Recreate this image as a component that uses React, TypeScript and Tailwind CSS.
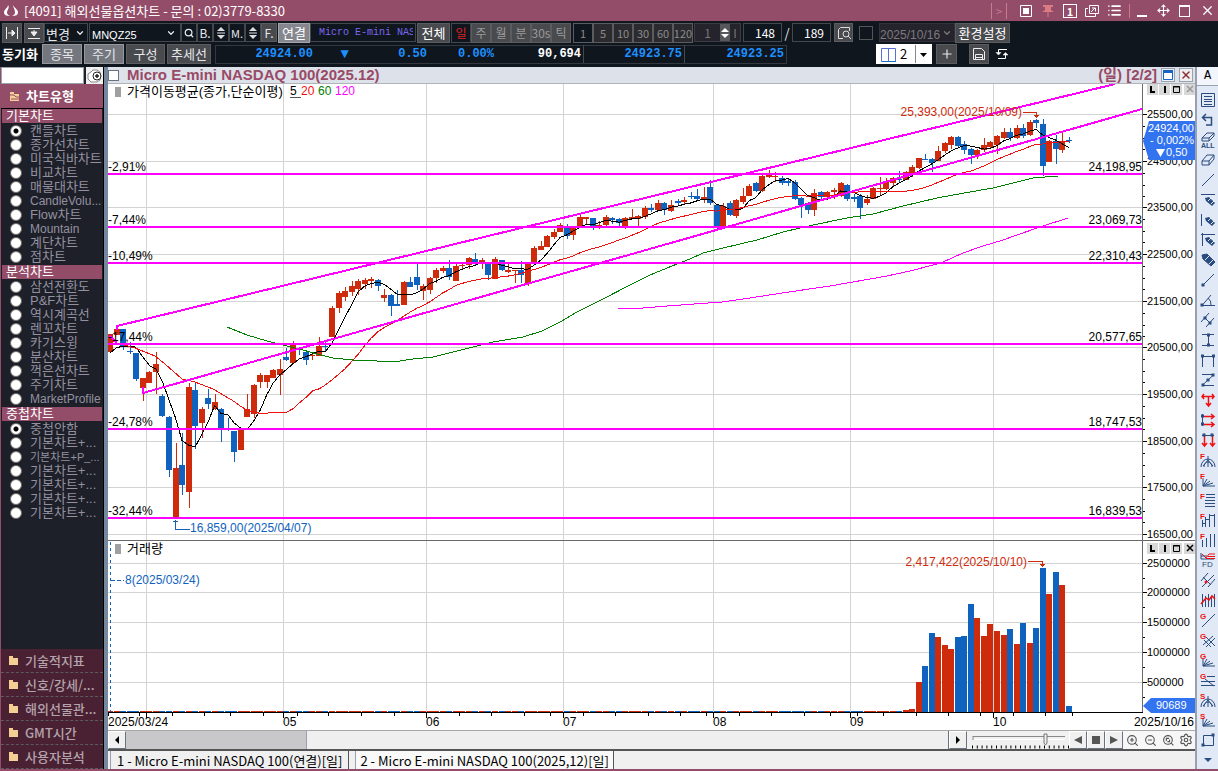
import type { ReactNode } from 'react'
import { ChevronDown, List, Move, Plus, Search, Settings, X, ZoomIn, ZoomOut } from 'lucide-react'

type Candle = [color: 'R' | 'B', high: number, top: number, bottom: number, low: number]

// Values are thirds of a pixel below the top of the price panel
const CANDLES: Candle[] = [
  ['R', 762, 762, 815, 820], ['R', 738, 747, 764, 764], ['B', 747, 747, 800, 810], ['B', 785, 813, 817, 822],
  ['B', 818, 818, 896, 902], ['R', 894, 894, 923, 962], ['R', 874, 876, 910, 910], ['R', 816, 852, 875, 942],
  ['B', 942, 948, 1007, 1010], ['B', 1009, 1012, 1169, 1190], ['R', 1089, 1164, 1315, 1315], ['B', 1060, 1155, 1214, 1245],
  ['R', 910, 921, 1237, 1284], ['B', 908, 930, 1037, 1106], ['R', 980, 987, 1028, 1074], ['B', 927, 954, 971, 988],
  ['R', 942, 966, 986, 990], ['B', 983, 987, 1045, 1086], ['B', 1015, 1045, 1048, 1052], ['B', 1053, 1053, 1115, 1146],
  ['R', 1047, 1049, 1109, 1109], ['R', 942, 987, 1012, 1012], ['R', 912, 915, 1001, 1014], ['R', 879, 885, 905, 924],
  ['R', 885, 885, 905, 924], ['R', 867, 870, 893, 893], ['R', 837, 867, 884, 945], ['B', 804, 831, 839, 842],
  ['R', 784, 795, 848, 850], ['B', 800, 808, 811, 824], ['B', 816, 816, 839, 854], ['R', 818, 825, 828, 840],
  ['R', 771, 797, 827, 827], ['B', 785, 798, 801, 814], ['R', 678, 684, 770, 770], ['R', 633, 639, 685, 698],
  ['R', 621, 633, 650, 662], ['R', 603, 618, 636, 648], ['R', 597, 603, 627, 645], ['R', 594, 600, 612, 627],
  ['R', 591, 597, 603, 624], ['B', 597, 600, 618, 633], ['R', 626, 645, 653, 666], ['B', 642, 645, 677, 707],
  ['B', 630, 673, 677, 677], ['R', 602, 606, 674, 674], ['B', 590, 606, 620, 620], ['B', 550, 591, 614, 630],
  ['R', 613, 618, 632, 660], ['R', 591, 594, 629, 642], ['R', 564, 570, 593, 608], ['R', 558, 564, 572, 578],
  ['B', 540, 564, 590, 600], ['R', 552, 558, 602, 602], ['R', 549, 555, 558, 566], ['R', 531, 534, 554, 566],
  ['B', 519, 537, 546, 558], ['R', 534, 540, 548, 567], ['B', 548, 552, 584, 600], ['R', 531, 537, 596, 596],
  ['B', 540, 540, 569, 572], ['R', 548, 570, 575, 580], ['R', 570, 570, 573, 609], ['B', 543, 570, 584, 609],
  ['R', 548, 548, 608, 618], ['R', 498, 504, 546, 546], ['R', 483, 498, 509, 509], ['R', 465, 468, 500, 500],
  ['R', 447, 456, 470, 477], ['R', 429, 435, 455, 455], ['B', 432, 440, 467, 478], ['R', 440, 440, 464, 480],
  ['R', 405, 411, 440, 440], ['R', 411, 411, 416, 436], ['B', 414, 414, 440, 450], ['R', 423, 435, 438, 446],
  ['R', 405, 411, 435, 440], ['B', 410, 414, 419, 431], ['B', 414, 418, 428, 437], ['R', 411, 414, 440, 446],
  ['R', 387, 411, 418, 418], ['R', 405, 408, 416, 438], ['R', 378, 384, 410, 417], ['B', 372, 384, 390, 396],
  ['R', 360, 369, 390, 390], ['B', 366, 369, 390, 405], ['R', 360, 375, 392, 396], ['B', 357, 363, 369, 375],
  ['R', 351, 360, 366, 374], ['B', 336, 348, 351, 356], ['B', 327, 348, 357, 362], ['R', 321, 351, 358, 369],
  ['B', 300, 321, 368, 374], ['B', 372, 375, 438, 446], ['R', 369, 378, 440, 440], ['B', 363, 369, 405, 408],
  ['R', 357, 360, 408, 414], ['R', 324, 348, 366, 372], ['R', 312, 318, 347, 347], ['B', 306, 309, 332, 335],
  ['R', 282, 288, 332, 335], ['R', 270, 284, 291, 294], ['R', 276, 288, 291, 306], ['B', 287, 294, 308, 315],
  ['B', 294, 303, 309, 318], ['B', 300, 306, 356, 360], ['B', 351, 354, 375, 414], ['B', 366, 369, 389, 402],
  ['R', 327, 339, 389, 408], ['B', 333, 336, 350, 362], ['R', 333, 336, 350, 360], ['R', 324, 330, 336, 357],
  ['R', 306, 309, 348, 350], ['B', 312, 315, 356, 363], ['B', 342, 351, 356, 366], ['B', 342, 348, 383, 416],
  ['R', 345, 357, 368, 375], ['R', 321, 324, 358, 358], ['R', 291, 324, 327, 348], ['R', 294, 303, 327, 330],
  ['R', 291, 294, 309, 318], ['B', 273, 297, 300, 309], ['R', 273, 276, 300, 300], ['R', 255, 261, 284, 290],
  ['R', 234, 234, 264, 267], ['B', 222, 237, 240, 240], ['B', 234, 237, 248, 276], ['R', 198, 213, 242, 242],
  ['R', 186, 189, 213, 219], ['R', 168, 171, 195, 207], ['B', 168, 171, 198, 200], ['B', 183, 192, 209, 222],
  ['B', 204, 207, 225, 252], ['R', 207, 210, 225, 237], ['R', 174, 195, 210, 216], ['R', 183, 186, 201, 207],
  ['R', 165, 168, 195, 222], ['R', 144, 156, 173, 177], ['B', 144, 156, 174, 183], ['R', 135, 144, 173, 176],
  ['B', 132, 144, 168, 174], ['R', 120, 126, 164, 168], ['B', 117, 120, 130, 144], ['B', 117, 132, 257, 287],
  ['R', 180, 183, 245, 245], ['B', 165, 183, 206, 252], ['R', 156, 183, 209, 219], ['B', 171, 180, 183, 189],
]

// Bar heights of the last sessions, oldest first
const VOLUMES = [
  1, 1, 1, 2, 3, 30, 46, 79, 75, 67, 63, 75, 76, 108, 94, 76, 88, 81, 77, 83, 68, 89, 69, 84, 144, 118, 140, 127, 6,
]

const RED = '#ce2b0c'
const BLUE = '#0f63be'
const MAGENTA = '#ff00ff'

const xAt = (i: number) => 110.3 + i * 6.52
const yAt = (v: number) => Math.round(80 + v / 3)

const closes = CANDLES.map(([c, , top, bottom]) => (c === 'R' ? top : bottom))

function average(period: number) {
  const pts: string[] = []
  for (let i = period - 1; i < closes.length; i++) {
    const sum = closes.slice(i - period + 1, i + 1).reduce((a, b) => a + b, 0)
    pts.push(`${xAt(i).toFixed(1)},${(80 + sum / period / 3).toFixed(1)}`)
  }
  return pts.join(' ')
}

const MA5 = `110,353 116,348 123,346 133,346 ${average(5)}`
const MA20 = `110,340 117,343 135,348 155,356 165,364 182,379 195,382 213,389 ${average(20)}`
const MA60 =
  '227,327 247,335 267,341 283,345 303,350 317,354 333,358 353,360 377,361 400,361 413,359 433,357 453,352 477,346 493,342 523,337 542,331 560,322 577,312 603,299 630,285 650,275 677,264 690,259 703,253 723,248 757,240 783,232 813,225 847,218 873,214 903,206 937,198 970,192 993,188 1033,178 1058,176'
const MA120 =
  '618,309 643,308 667,306 722,302 750,298 782,293 830,286 870,279 887,276 910,271 937,264 943,262 963,253 983,246 1003,240 1017,235 1040,227 1068,218'

const PRICE_GRID = [
  { y: 114, label: '25500,00' }, { y: 161, label: '24500,00' }, { y: 207, label: '23500,00' },
  { y: 254, label: '22500,00' }, { y: 301, label: '21500,00' }, { y: 347, label: '20500,00' },
  { y: 394, label: '19500,00' }, { y: 441, label: '18500,00' }, { y: 487, label: '17500,00' },
  { y: 534, label: '16500,00' },
]
const VOLUME_GRID = [
  { y: 563, label: '2500000' }, { y: 592, label: '2000000' }, { y: 622, label: '1500000' },
  { y: 652, label: '1000000' }, { y: 682, label: '500000' },
]
const LEVELS = [
  { y: 174, pct: '-2,91%', price: '24,198,95' },
  { y: 227, pct: '-7,44%', price: '23,069,73' },
  { y: 263, pct: '-10,49%', price: '22,310,43' },
  { y: 344, pct: '-17,44%', price: '20,577,65' },
  { y: 429, pct: '-24,78%', price: '18,747,53' },
  { y: 518, pct: '-32,44%', price: '16,839,53' },
]
const MONTHS = [
  { x: 146 }, { x: 283, label: '05' }, { x: 426, label: '06' }, { x: 563, label: '07' },
  { x: 713, label: '08' }, { x: 850, label: '09' }, { x: 993, label: '10' },
]
const WEEKS = [
  108, 139, 172, 204, 230, 263, 297, 328, 361, 394, 426, 459, 491, 524, 550, 583, 615, 648, 680, 706, 739, 771, 804,
  830, 857, 883, 916, 948, 980, 1013, 1045, 1072,
]

function PanelButtons({ y }: { y: number }) {
  return (
    <g>
      {[1147, 1159, 1171, 1184].map(x => (
        <rect key={x} x={x} y={y - 5} width="11" height="11" fill="#d8d8d8" />
      ))}
      <path d={`M1151 ${y - 3}v6h4`} stroke="#000" strokeWidth="2" fill="none" />
      <path d={`M1165 ${y - 3}v7`} stroke="#000" strokeWidth="2" />
      <path d={`M1173.5 ${y - 2.5}h6v6h-6zM1173 ${y - 2}h7`} stroke="#000" fill="none" />
      <path d={`M1187 ${y - 3}l6 6m0 -6l-6 6`} stroke={y < 100 ? '#999' : '#000'} strokeWidth="1.5" />
    </g>
  )
}

function Chart() {
  return (
    <svg
      viewBox="108 84 1087 646"
      preserveAspectRatio="xMinYMin meet"
      className="block min-h-0 w-full flex-1 bg-white text-[12px] font-['Liberation_Sans','Noto_Sans_CJK_KR',sans-serif]"
      role="img"
      aria-label="Micro E-mini NASDAQ 100"
    >
      <g shapeRendering="crispEdges" fill="none">
        {/* Grid */}
        <g stroke="#d3d3d3">
          {[...PRICE_GRID, ...VOLUME_GRID].map(g => (
            <path key={g.y} d={`M108 ${g.y + 0.5}H1142`} />
          ))}
          {MONTHS.map(m => (
            <path key={m.x} d={`M${m.x + 0.5} 84V712`} />
          ))}
        </g>

        {/* Candles */}
        {CANDLES.map(([c, high, top, bottom, low], i) => {
          const x = Math.round(xAt(i))
          const color = c === 'R' ? RED : BLUE
          return (
            <g key={i} fill={color}>
              <rect x={x} y={yAt(high)} width="1" height={Math.max(1, yAt(low) - yAt(high))} />
              <rect x={x - 3} y={yAt(top)} width="6" height={Math.max(1, yAt(bottom) - yAt(top))} />
            </g>
          )
        })}

        {/* Volume */}
        {CANDLES.map(([c], i) => {
          const h = VOLUMES[i - (CANDLES.length - VOLUMES.length)] ?? 1
          return <rect key={i} x={Math.round(xAt(i)) - 3} y={712 - h} width="6" height={h} fill={c === 'R' ? RED : BLUE} />
        })}

        {/* Moving averages */}
        <polyline points={MA5} stroke="#000" />
        <polyline points={MA20} stroke="#f01010" />
        <polyline points={MA60} stroke="#008000" />
        <polyline points={MA120} stroke={MAGENTA} />

        {/* Trend lines and levels */}
        <g stroke={MAGENTA} strokeWidth="2">
          <path d="M110 336L117 343M117 330V326L1115 84M143 387V393L1142 109" />
          {LEVELS.map(l => (
            <path key={l.y} d={`M108 ${l.y}H1142`} />
          ))}
        </g>

        {/* Axes */}
        <path d="M1142.5 84V713M108 540.5H1195" stroke="#696969" />
        <path d="M108 712.5H1143" stroke="#000" />
        <path d={PRICE_GRID.map(g => `M1143 ${g.y + 0.5}h4`).join('')} stroke="#000" />
        <path d={VOLUME_GRID.map(g => `M1143 ${g.y + 0.5}h4M1143 ${g.y + 15.5}h2`).join('')} stroke="#000" />
        <path d={PRICE_GRID.slice(0, 9).map(g => `M1143 ${g.y + 12.5}h2m-2 12h2m-2 11h2`).join('')} stroke="#000" />
        <path d={WEEKS.map(x => `M${x + 0.5} 713v3`).join('')} stroke="#000" />
        <path d={MONTHS.map(m => `M${m.x + 0.5} 713v5`).join('')} stroke="#000" />
        <path d="M110.5 542V712" stroke={BLUE} strokeDasharray="3 3" />
        <path d="M111 580.5H124" stroke={BLUE} strokeDasharray="4 2" />

        {/* High and low callouts */}
        <path d="M175.5 520V529.5H190M173 521.5h5" stroke={BLUE} />
        <path d="M1023 112.5H1036.5V118M1034 115.5h5M1035 116.5h3M1028 561.5H1042.5V567M1040 564.5h5M1041 565.5h3" stroke={RED} />
      </g>

      {/* Labels */}
      {LEVELS.map(l => (
        <g key={l.y}>
          <text x="108" y={l.y - 3}>{l.pct}</text>
          <text x="1142" y={l.y - 3} textAnchor="end">{l.price}</text>
        </g>
      ))}
      <g className="text-[11px]">
        {[...PRICE_GRID, ...VOLUME_GRID].map(g => (
          <text key={g.y} x="1147" y={g.y + 4}>{g.label}</text>
        ))}
      </g>
      {MONTHS.filter(m => m.label).map(m => (
        <text key={m.x} x={m.x} y="726">{m.label}</text>
      ))}
      <text x="108" y="726">2025/03/24</text>
      <text x="1194" y="726" textAnchor="end">2025/10/16</text>
      <text x="1022" y="116" textAnchor="end" fill={RED}>25,393,00(2025/10/09)</text>
      <text x="1027" y="566" textAnchor="end" fill={RED}>2,417,422(2025/10/10)</text>
      <text x="190" y="532" fill={BLUE}>16,859,00(2025/04/07)</text>
      <text x="125" y="584" fill={BLUE}>8(2025/03/24)</text>

      <rect x="115" y="87" width="6" height="10" fill="#a0a0a0" />
      <rect x="115" y="544" width="6" height="10" fill="#a0a0a0" />
      <g className="text-[13px]">
        <text x="127" y="96">가격이동평균(종가,단순이평)</text>
        <text x="127" y="553">거래량</text>
      </g>
      <text x="290" y="95">5</text>
      <path d="M290 97.5h11" stroke="#555" />
      <text x="301" y="95" fill="#f01010">20</text>
      <text x="318" y="95" fill="#008000">60</text>
      <text x="335" y="95" fill={MAGENTA}>120</text>

      <PanelButtons y={89} />
      <PanelButtons y={548} />

      {/* Current value tags */}
      <path d="M1143 141L1149 121H1195V160H1149Z" fill="#3273f0" />
      <path d="M1143 706L1151 698H1195V713H1151Z" fill="#3273f0" />
      <g fill="#fff" className="text-[11px]">
        <text x="1148" y="132">24924,00</text>
        <text x="1150" y="144">- 0,002%</text>
        <path d="M1156 149h9l-4.500 8z" />
        <text x="1166" y="156">0,50</text>
        <text x="1156" y="709">90689</text>
      </g>
    </svg>
  )
}

/* ---------- drawing tools ---------- */

const pen = (
  <>
    <path d="M5 6l4-1 6 6-3 3-6-5z" fill="#2b4c7e" stroke="none" />
    <path d="M8 9l3-3M11 12l3-3" stroke="#e1e8f6" />
  </>
)
const dot = (x: number, y: number) => <rect x={x - 1.5} y={y - 1.5} width="3" height="3" fill="#2b4c7e" stroke="none" />
const mark = (letter: string) => (
  <text x="0" y="7" stroke="none" fill="#f01010" className="text-[8px] font-bold font-['Liberation_Sans',sans-serif]">
    {letter}
  </text>
)
const fan = <path d="M3 6v8h12M3 14l4-7M3 14l7-5M3 14l10-3" />
const arcs = <path d="M8 4v11M1 15a7 8 0 0 1 14 0M4 15a4 5 0 0 1 8 0M8 8l-5 6M8 8l5 6" />

const TOOLS: { name: string; icon: ReactNode }[] = [
  { name: 'List', icon: <path d="M1.500 1.500h13v13h-13zM4 4.500h8M4 7.500h8M4 9.500h8M4 12.500h8" /> },
  { name: 'Undo', icon: <path d="M6 2L2.500 5.500L6 9M2.500 5.500H11.500V13H6" strokeWidth="1.500" /> },
  {
    name: 'Erase all',
    icon: (
      <>
        <path d="M2 6l5-5h7l-5 5zM2 6v3h7l5-5V1M9 6v3" />
        <text x="1" y="16" stroke="none" fill="#2b4c7e" className="text-[7px] font-bold font-['Liberation_Sans',sans-serif]">ALL</text>
      </>
    ),
  },
  { name: 'Erase', icon: <path d="M2 9l5-6h7l-5 6zM2 9v4h7l5-6V3M9 9v4" /> },
  { name: 'Line', icon: <path d="M2 14L14 2" /> },
  { name: 'Horizontal line', icon: <><path d="M1 2.500h14" />{pen}</> },
  { name: 'Vertical line', icon: <><path d="M1.500 2v12" />{pen}</> },
  { name: 'Cross line', icon: <><path d="M1 2.500h14M2.500 1v13" />{pen}</> },
  { name: 'Pen', icon: <><path d="M2 3l5-1 8 8-4 4-8-7z" fill="#2b4c7e" /><path d="M5 8l4-4M9 12l4-4" stroke="#e1e8f6" /></> },
  { name: 'Segment', icon: <><path d="M3 13L14 2" />{dot(3, 13)}</> },
  { name: 'Angle', icon: <><path d="M15 13.500H2L11 3M8 6a8 8 0 0 1 3 7" />{dot(2, 13)}</> },
  { name: 'Channel', icon: <><path d="M1 10L9 1M6 15L14 6M5 6l5 5" />{dot(5, 6)}{dot(10, 11)}</> },
  { name: 'Height', icon: <><path d="M2 2.500h12M2 13.500h12M8.500 2v12" />{dot(8.5, 3)}{dot(8.5, 13)}</> },
  { name: 'Period', icon: <><path d="M2.500 3v12M13.500 3v12M2 4.500h12" />{dot(2.5, 4)}{dot(13.5, 4)}</> },
  { name: 'Zigzag', icon: <><path d="M2 2.500h12L2 13.500h12" />{dot(13, 3)}{dot(8, 8)}{dot(3, 13)}</> },
  { name: 'Move', icon: <path d="M2 4.500h12M8.500 4v9M4 2L2 4.500L4 7M12 2l2 2.500L12 7M6 11l2.500 3L11 11" stroke="#f01010" strokeWidth="1.500" /> },
  { name: 'Extend right', icon: <><path d="M2.500 2v12" /><path d="M3 4.500h11M3 12.500h11M11 2l3 2.500L11 7M11 10l3 2.500L11 15" stroke="#f01010" strokeWidth="1.500" />{dot(2.5, 4)}{dot(2.5, 12)}</> },
  { name: 'Extend down', icon: <><path d="M2 3.500h12" /><path d="M4.500 4v9M12.500 4v9M2 11l2.500 3L7 11M10 11l2.500 3L15 11" stroke="#f01010" strokeWidth="1.500" />{dot(4, 3)}{dot(12, 3)}</> },
  { name: 'Fibonacci arc', icon: <>{arcs}{mark('F')}</> },
  { name: 'Fibonacci fan', icon: <>{fan}{mark('F')}</> },
  { name: 'Fibonacci levels', icon: <><path d="M6 2.500h9M6 5.500h9M5 8.500h10M5 11.500h10M5 14.500h10" />{mark('F')}</> },
  { name: 'Fibonacci zones', icon: <><path d="M2.500 8v7M5.500 5v10M9.500 2v13M14.500 2v13M5 7.500h4M9 3.500h5M2 11.500h4" />{mark('F')}</> },
  { name: 'Fibonacci time', icon: <><path d="M2.500 8v7M6.500 6v9M10.500 2v13M14.500 2v13" />{mark('F')}</> },
  {
    name: 'FD',
    icon: (
      <>
        <path d="M1 1v6h13M1 4h6" /><path d="M2 2l4 4 3-4 6 0M8 4.500h7M6 6.500h9" stroke="#f01010" />
        <text x="2" y="15" stroke="none" fill="#2b4c7e" className="text-[8px] font-['Liberation_Sans',sans-serif]">FD</text>
      </>
    ),
  },
  { name: 'Pitchfork', icon: <><path d="M1 9L8 1M2 15L14 3M8 15l7-8M3 5l8 8" /><circle cx="6" cy="10" r="1.500" fill="#f01010" stroke="none" /></> },
  { name: 'Regression', icon: <><path d="M2.500 2v13M5.500 4v11M8.500 2v13M11.500 4v11M14.500 2v13" /><path d="M1 12l5-6 3 2 3-4 3 3" stroke="#f01010" strokeWidth="1.500" /></> },
  { name: 'Gann line', icon: <><path d="M2 15L15 2" />{mark('G')}</> },
  { name: 'Gann grid', icon: <><path d="M3 13L13 4M6 15l9-9M6 5l9 9M4 8l7 7" />{mark('G')}</> },
  { name: 'Gann fan', icon: <>{fan}{mark('G')}</> },
  { name: 'Gann levels', icon: <><path d="M7 4.500h8M1 9.500h14M1 13.500h14M5 7l9 7" />{mark('G')}</> },
  { name: 'Speed arc', icon: <>{arcs}{mark('S')}</> },
  { name: 'Speed fan', icon: <>{fan}{mark('S')}</> },
  { name: 'Rectangle', icon: <><path d="M3.500 3.500h10v10h-10z" />{dot(13, 3)}{dot(3, 13)}</> },
  { name: 'More', icon: <path d="M4 6h8l-4 4z" fill="#2b4c7e" stroke="none" /> },
]

function ToolStrip() {
  return (
    <aside className="flex w-[21px] shrink-0 flex-col bg-[#e1e8f6]">
      <button className="mb-1 h-5 border-b border-gray-400 bg-[#f2f5fb] text-[12px] text-black font-['Liberation_Mono',monospace]">A</button>
      {TOOLS.map(t => (
        <button key={t.name} aria-label={t.name} className="flex h-5 shrink-0 items-center justify-center">
          <svg viewBox="0 0 16 16" className="size-4" fill="none" stroke="#2b4c7e">{t.icon}</svg>
        </button>
      ))}
    </aside>
  )
}

/* ---------- sidebar ---------- */

const GROUPS = [
  { title: '기본차트', selected: 0, items: ['캔들차트', '종가선차트', '미국식바차트', '비교차트', '매물대차트', 'CandleVolu...', 'Flow차트', 'Mountain', '계단차트', '점차트'] },
  { title: '분석차트', selected: -1, items: ['삼선전환도', 'P&F차트', '역시계곡선', '렌꼬차트', '카기스윙', '분산차트', '꺽은선차트', '주기차트', 'MarketProfile'] },
  { title: '중첩차트', selected: 0, items: ['중첩안함', '기본차트+...', '기본차트+P_...', '기본차트+...', '기본차트+...', '기본차트+...', '기본차트+...'] },
]

const itemSize = (item: string) => {
  if (item.includes('P_')) return 'text-[11px]'
  return /[가-힣]/.test(item) ? 'text-[13px]' : 'text-[12px]'
}

function Folder({ open }: { open?: boolean }) {
  return (
    <svg viewBox="0 0 11 11" className="size-[11px] shrink-0">
      <path d="M1 1h4v2h5v7H1z" fill="#f3cf96" />
      {open && <path d="M1 4h4l2 2h3M2 8h8" stroke="#944d69" fill="none" />}
    </svg>
  )
}

function Sidebar() {
  return (
    <aside className="flex w-[103px] shrink-0 flex-col border-l border-[#944d69] bg-[#1d2028] text-[13px]">
      <div className="flex h-[17px] shrink-0 gap-0.5">
        <input aria-label="차트 검색" className="w-0 flex-1 border border-gray-400 bg-white px-1" />
        <button aria-label="찾기" className="flex w-[17px] items-center justify-center bg-[#f0f0f0]">
          <svg viewBox="0 0 16 14" className="h-3.5 w-4" fill="none" stroke="#888">
            <path d="M4 3l2-2h4l3 2v8l-3 2H4l-3-3V5z" fill="#fff" />
            <circle cx="10" cy="7" r="4" fill="#fff" stroke="#222" />
            <path d="M8 7h4M10 5v4" stroke="#222" strokeWidth="1.500" />
          </svg>
        </button>
      </div>
      <h2 className="flex h-6 shrink-0 items-center gap-1.5 bg-[#944d69] pl-2 text-[13px] font-bold text-white">
        <Folder open />
        차트유형
      </h2>
      <div className="min-h-0 flex-1 border-t border-black font-['Liberation_Sans','Noto_Sans_CJK_KR',sans-serif]">
        {GROUPS.map((g, gi) => (
          <fieldset key={g.title}>
            <legend className="float-left h-[15px] w-full border border-t-0 border-[#1d2028] bg-[#944d69] pl-1 text-[13px] leading-[14px] text-white">
              {g.title}
            </legend>
            <div className="clear-both pb-px">
              {g.items.map((item, i) => (
                <label key={i} className="flex h-3.5 items-center gap-2 pl-[9px] whitespace-nowrap text-[#9490a0]">
                  <input
                    type="radio"
                    name={`group${gi}`}
                    defaultChecked={i === g.selected}
                    className="size-3 shrink-0 appearance-none rounded-full border border-[#6d6b62] bg-white checked:bg-[radial-gradient(#000_2px,#fff_3px)]"
                  />
                  <span className={`leading-[14px] ${itemSize(item)}`}>{item}</span>
                </label>
              ))}
            </div>
          </fieldset>
        ))}
      </div>
      {['기술적지표', '신호/강세/...', '해외선물관...', 'GMT시간', '사용자분석'].map(name => (
        <button key={name} className="flex h-6 shrink-0 items-center gap-1.5 border-b border-dashed border-[#5c5a5c] bg-[#4a2132] pl-[7px] font-medium whitespace-nowrap text-[#b3a3ac]">
          <Folder />
          {name}
        </button>
      ))}
    </aside>
  )
}

/* ---------- top bars ---------- */

function TitleBar() {
  return (
    <header className="flex h-[21px] shrink-0 items-center bg-[#944d69] pl-1 text-[13px] text-white">
      <svg viewBox="0 0 14 12" className="mr-1.5 h-3 w-3.5 shrink-0" fill="#fff">
        <path d="M4 0C4 3 0 4 0 7.500 0 10 2 11 6 11 4 10 3 9 3 7.500 3 5 6 3 4 0zM9 0c0 3 2 4 2 7.500 0 1.500-1 2.500-3 3.500 4 0 6-1 6-3.500C14 4 10 3 9 0z" />
      </svg>
      <h1 className="flex-1 truncate">[4091] 해외선물옵션차트 - 문의 : 02)3779-8330</h1>
      <div className="flex items-center">
        <span className="mr-2.5 border-x border-[#c77b8b] px-1 text-[11px] leading-4 text-[#c77b8b]">&gt;</span>
        <button aria-label="캡처" className="flex w-[18px] justify-center">
          <svg viewBox="0 0 12 12" className="size-3"><path d="M.5.5h11v11H.5z" fill="none" stroke="#fff" /><path d="M3 3h6v6H3z" fill="#fff" /></svg>
        </button>
        <button aria-label="고정" className="flex w-[26px] justify-center">
          <svg viewBox="0 0 12 12" className="size-3"><path d="M1 0h10v2H9v3l3 2H0l3-2V2H1zM5.500 7h1v5h-1z" fill="#d97b85" /></svg>
        </button>
        <button aria-label="화면 1" className="mr-1 ml-0.5 size-3.5 border border-white text-[11px] leading-3 font-bold">1</button>
        <button aria-label="새 창" className="flex w-[22px] justify-center">
          <svg viewBox="0 0 14 12" className="h-3 w-3.5" fill="none" stroke="#fff"><path d="M4.500.5h9v8h-9zM3 3.500H.5v8h10V9M6 7l4-4M7 3h3.500v3.500" /></svg>
        </button>
        <button aria-label="목록" className="flex w-[22px] justify-center"><List size={15} strokeWidth={2.5} /></button>
        <button aria-label="최소화" className="ml-1 flex h-3.5 w-6 items-end justify-center border-l border-[#c77b8b] pb-px"><span className="h-0.5 w-2.5 bg-white" /></button>
        <button aria-label="이동" className="flex w-5 justify-center"><Move size={13} /></button>
        <button aria-label="최대화" className="mx-1.5 h-3 w-[11px] border border-t-2 border-white" />
        <button aria-label="닫기" className="flex w-[22px] justify-center"><X size={15} /></button>
      </div>
    </header>
  )
}

const DARK = 'shrink-0 border border-[#44474c] bg-[#10161e]'
const GRAY = 'shrink-0 border border-[#5a5c60] bg-[#484a4e]'

function Spinner({ label }: { label: string }) {
  return (
    <button aria-label={label} className={`flex h-[19px] w-4 items-center justify-center ${DARK}`}>
      <svg viewBox="0 0 10 14" className="h-3.5 w-2.5" fill="#ddd"><path d="M1 5l4-4 4 4zM1 9l4 4 4-4zM1 6.500h8v1H1z" /></svg>
    </button>
  )
}

function Toolbar() {
  return (
    <div className="h-[46px] shrink-0 overflow-hidden border-t border-[#15181f] bg-[#10161e] pl-0.5 text-[13px] text-gray-200">
      <div className="flex h-[21px] items-center">
        <button aria-label="간격 넓게" className={`mr-0.5 flex h-5 w-5 items-center justify-center ${GRAY}`}>
          <svg viewBox="0 0 14 12" className="h-3 w-3.5" stroke="#eee" fill="#eee"><path d="M1.500 0v12M12.500 0v12M3 6h6" /><path d="M7 3l3 3-3 3z" /></svg>
        </button>
        <button aria-label="높이 맞춤" className={`flex h-5 w-5 items-center justify-center ${GRAY}`}>
          <svg viewBox="0 0 14 12" className="h-3 w-3.5" stroke="#eee" fill="#eee"><path d="M1 1.500h12M1 11.500h12M7 3v3" /><path d="M4 5l3 4 3-4z" /></svg>
        </button>
        <div className={`relative mr-px h-[19px] w-11 ${DARK}`}>
          <select aria-label="변경" className="h-full w-full appearance-none bg-transparent pl-px leading-4"><option>변경</option></select>
          <ChevronDown size={10} strokeWidth={3} className="pointer-events-none absolute top-1 right-0.5" />
        </div>
        <div className={`relative h-[19px] w-[92px] ${DARK}`}>
          <select aria-label="종목코드" className="h-full w-full appearance-none bg-transparent pl-0.5 text-[11px] leading-4 text-white font-['Liberation_Sans',sans-serif]"><option>MNQZ25</option></select>
          <ChevronDown size={10} strokeWidth={3} className="pointer-events-none absolute top-1 right-1" />
        </div>
        <button aria-label="검색" className={`flex h-[19px] w-4 items-center justify-center ${DARK}`}><Search size={10} strokeWidth={3} /></button>
        <button className={`h-[19px] w-4 text-[12px] leading-4 ${DARK}`}>B.</button>
        <Spinner label="B" />
        <button className={`h-[19px] w-4 text-[11px] leading-4 ${DARK}`}>M.</button>
        <Spinner label="M" />
        <button className={`mr-px h-[19px] w-4 text-[12px] leading-4 ${GRAY}`}>F.</button>
        <button className="h-5 w-8 shrink-0 border border-[#a5a6ad] bg-[#85868e] leading-[18px] text-white">연결</button>
        <input aria-label="종목명" readOnly value="Micro E-mini NASDAQ" className={`mr-px h-[19px] w-[106px] pr-0.5 pl-2 text-[10px] text-[#7b68ee] font-['Liberation_Mono',monospace] ${DARK}`} />
        <button className={`mr-px h-5 w-[33px] leading-[18px] text-white ${GRAY}`}>전체</button>
        <button className={`h-5 w-5 text-[12px] leading-[18px] text-[#e02020] ${DARK}`}>일</button>
        {['주', '월', '분', '30s', '틱'].map(t => (
          <button key={t} className={`h-5 w-5 text-[12px] leading-[18px] text-[#9a9a9a] ${GRAY}`}>
            <span className="-mx-1">{t}</span>
          </button>
        ))}
        <div className="ml-0.5 flex">
          {['1', '5', '10', '30', '60', '120'].map(n => (
            <button key={n} className="h-5 w-5 border border-[#5a5c60] bg-[#2b2b2f] text-[11px] leading-[18px] text-[#8b8b8b] first:bg-[#10161e]">
              <span className="-mx-1">{n}</span>
            </button>
          ))}
        </div>
        <div className="mr-0.5 ml-px flex h-[19px] w-[47px] shrink-0 items-center border border-[#3c3c44] bg-[#25232b] text-[12px]">
          <input aria-label="주기" defaultValue="1" className="w-5 flex-1 bg-transparent text-center text-[#777]" />
          <button aria-label="주기 조절" className="flex h-full w-2.5 items-center bg-[#55575b]">
            <svg viewBox="0 0 10 14" className="h-3.5 w-2.5" fill="#fff"><path d="M1 6l4-4 4 4zM1 8l4 4 4-4z" /></svg>
          </button>
          <span className="w-2.5 text-center text-[#777]">I</span>
        </div>
        <input aria-label="표시 개수" defaultValue="148" className={`h-[19px] w-[39px] pr-1.5 text-right text-[12px] text-white ${DARK}`} />
        <span className="w-2.5 shrink-0 text-center">/</span>
        <input aria-label="전체 개수" defaultValue="189" className={`mr-[3px] h-[19px] w-[39px] pr-1.5 text-right text-[12px] text-white ${DARK}`} />
        <button aria-label="조회" className={`flex h-[19px] w-[19px] items-center justify-center ${GRAY}`}>
          <svg viewBox="0 0 14 14" className="size-3.5" fill="none" stroke="#ddd"><path d="M6 12.500H1.500v-9l2-2h9V5" /><circle cx="9" cy="8" r="3" /><path d="M11 10l3 3" /></svg>
        </button>
        <input type="checkbox" aria-label="날짜 지정" className="mx-1.5 size-3.5 shrink-0 appearance-none border border-[#555]" />
        <div className="relative h-[19px] w-[76px] shrink-0 border border-[#33323a] bg-[#25232b] text-[#7c7a80]">
          <select aria-label="날짜" className="h-full w-full appearance-none bg-transparent text-[12px] leading-4 font-['Liberation_Sans',sans-serif]"><option>2025/10/16</option></select>
          <ChevronDown size={10} strokeWidth={3} className="pointer-events-none absolute top-1 right-0.5" />
        </div>
        <button className={`h-5 w-[55px] leading-[18px] text-white ${GRAY}`}>환경설정</button>
      </div>

      <div className="mt-px flex h-5 items-center">
        <span className="w-10 shrink-0 font-bold whitespace-nowrap text-white">동기화</span>
        <button className="mr-0.5 h-5 w-10 shrink-0 border border-[#96989c] bg-[#74777e] leading-[18px]">종목</button>
        <button className="mr-0.5 h-5 w-10 shrink-0 border border-[#96989c] bg-[#74777e] leading-[18px]">주기</button>
        <button className={`mr-0.5 h-5 w-[39px] leading-[18px] ${GRAY}`}>구성</button>
        <button className={`mr-1 h-5 w-11 leading-[18px] ${GRAY}`}>추세선</button>
        <div className="flex h-[19px] w-[572px] shrink-0 items-center border border-[#34383f] text-right text-[12px] font-bold text-[#1e90ff] font-['Liberation_Mono',monospace]">
          <span className="w-[97px]">24924.00</span>
          <span className="w-9 text-[14px]">▼</span>
          <span className="w-[78px]">0.50</span>
          <span className="w-[67px]">0.00%</span>
          <span className="w-[90px] border-r border-[#44484f] pr-0.5 text-white">90,694</span>
          <span className="w-[101px] border-r border-[#44484f] pr-0.5">24923.75</span>
          <span className="flex-1 pr-0.5">24923.25</span>
        </div>
        <div className="relative mr-1 ml-[89px] h-5 w-14 shrink-0 bg-white text-black">
          <select aria-label="화면 분할" className="h-full w-full appearance-none pl-6 leading-4"><option>2</option></select>
          <svg viewBox="0 0 56 20" className="pointer-events-none absolute inset-0" fill="none">
            <path d="M5.500 4.500h14v13h-14zM12.500 4v14" stroke="#5b6fd0" /><path d="M6 17.500h14" stroke="#1570c8" />
            <path d="M39.500 1v18" stroke="#888" /><path d="M44 9h7l-3.500 4z" fill="#000" />
          </svg>
        </div>
        <button aria-label="추가" className={`mr-3 flex h-5 w-[21px] items-center justify-center ${GRAY}`}><Plus size={14} /></button>
        <button aria-label="저장" className={`mr-1 flex h-5 w-5 items-center justify-center ${GRAY}`}>
          <svg viewBox="0 0 14 14" className="size-3.5" fill="none" stroke="#eee"><path d="M1.500 1.500h8l3 3v8h-11zM3.500 12V7.500h7V12M4 10.500h6" /></svg>
        </button>
        <button aria-label="새로고침" className="flex h-5 w-[18px] shrink-0 items-center justify-center">
          <svg viewBox="0 0 14 14" className="size-3.5" fill="none" stroke="#fff"><path d="M3.500 7V2.500H12M10.500 7v4.500H3" /><path d="M1 5.500h5L3.500 8zM8 8h5l-2.500-2.500z" fill="#fff" strokeWidth=".5" /></svg>
        </button>
      </div>
    </div>
  )
}

/* ---------- bottom bars ---------- */

const RAISED = 'flex h-full w-[18px] shrink-0 items-center justify-center border border-white border-r-gray-500 border-b-gray-500 bg-[#f0f0f0]'

function ScrollRow() {
  return (
    <div className="flex h-5 shrink-0 items-center border-t border-b border-[#a8a8a8] border-b-[#555] bg-[#f0f0f0]">
      <button aria-label="왼쪽" className={RAISED}>
        <svg viewBox="0 0 8 8" className="size-2"><path d="M6 0v8L2 4z" /></svg>
      </button>
      <div className="h-full flex-1 border-r border-gray-500 bg-[#efefef]">
        <div className="h-full w-[22%] border-r border-gray-400 bg-[#c8c8ca]" />
      </div>
      <button aria-label="오른쪽" className={`${RAISED} mr-1`}>
        <svg viewBox="0 0 8 8" className="size-2"><path d="M2 0v8l4-4z" /></svg>
      </button>
      <div className="relative h-full w-[98px] shrink-0">
        <input type="range" aria-label="확대" defaultValue={80} className="absolute inset-0 h-full w-full opacity-0" />
        <svg viewBox="0 0 98 18" className="pointer-events-none h-full w-full" fill="none">
          <path d="M2 5.500h92M2 5v4" stroke="#888" /><path d="M3 8.500h91" stroke="#fff" />
          <path d="M73 3h3v9l-1.500 2-1.500-2z" fill="#f0f0f0" stroke="#777" />
          <path d="M1 16H98" stroke="#000" strokeWidth="3" strokeDasharray="1 3.800" />
        </svg>
      </div>
      <button aria-label="이전" className={RAISED}><svg viewBox="0 0 10 10" className="size-2.5" fill="#555"><path d="M9 1v8L1 5z" /></svg></button>
      <button aria-label="정지" className={RAISED}><svg viewBox="0 0 10 10" className="size-2.5" fill="#555"><path d="M1 1h8v8H1z" /></svg></button>
      <button aria-label="다음" className={RAISED}><svg viewBox="0 0 10 10" className="size-2.5" fill="#555"><path d="M1 1v8l8-4z" /></svg></button>
      <div className="flex h-full items-center bg-[#f7f7f7] text-[#555]">
        <button aria-label="확대" className="flex w-[18px] justify-center"><ZoomIn size={13} /></button>
        <button aria-label="축소" className="flex w-[18px] justify-center"><ZoomOut size={13} /></button>
        <button aria-label="영역 확대" className="flex w-[18px] justify-center">
          <svg viewBox="0 0 24 24" className="size-[13px]" fill="none" stroke="currentColor" strokeWidth="2">
            <circle cx="11" cy="11" r="8" /><path d="M21 21l-4-4M8 13V8h5M14 10v4h-4" />
          </svg>
        </button>
        <button aria-label="설정" className="flex w-[18px] justify-center"><Settings size={14} /></button>
      </div>
    </div>
  )
}

function Tabs() {
  return (
    <nav className="flex h-[19px] shrink-0 gap-1.5 border-t border-[#555] bg-[#f0f0f0] pl-0.5 text-[13px] text-black">
      <button className="border-x border-gray-400 border-r-[#555] px-1.5 leading-[17px] whitespace-nowrap">
        1 - Micro E-mini NASDAQ 100(연결)[일]
      </button>
      <button className="border-x border-gray-400 border-r-[#555] bg-[#f9f9f9] px-1 leading-[17px] whitespace-nowrap">
        2 - Micro E-mini NASDAQ 100(2025,12)[일]
      </button>
    </nav>
  )
}

export default function App() {
  return (
    <div className="flex h-screen w-full flex-col overflow-hidden border-b-2 border-[#944d69] bg-[#10161e] font-['Noto_Sans_CJK_KR',sans-serif]">
      <TitleBar />
      <Toolbar />
      <div className="flex min-h-0 flex-1">
        <Sidebar />
        <div className="w-[5px] shrink-0 border-l border-black bg-[#75889d]" />
        <main className="flex min-w-0 flex-1 flex-col">
          <div className="flex h-[17px] shrink-0 items-center border-b border-[#b0b3b8] bg-[#dde2ea] text-[15px] leading-4 font-bold text-[#994a66] font-['Liberation_Sans','Noto_Sans_CJK_KR',sans-serif]">
            <input type="checkbox" aria-label="선택" className="mr-2 size-[11px] shrink-0 appearance-none border border-gray-500 bg-white" />
            <h2 className="flex-1 whitespace-nowrap">Micro E-mini NASDAQ 100(2025.12)</h2>
            <span className="mr-1">(일) [2/2]</span>
            <button aria-label="창 복원" className="mr-1 flex size-3.5 items-center justify-center border border-gray-400 bg-[#e8f0fa]">
              <svg viewBox="0 0 10 10" className="size-2.5"><path d="M.5.5h9v9h-9z" fill="#fff" stroke="#1a63c4" /><path d="M0 0h10v3H0z" fill="#1a63c4" /></svg>
            </button>
            <button aria-label="창 닫기" className="mr-0.5 flex size-3.5 items-center justify-center border border-gray-400 bg-[#f0f0f0] text-[#8d3038]"><X size={12} strokeWidth={3} /></button>
          </div>
          <Chart />
          <ScrollRow />
          <Tabs />
        </main>
        <div className="w-0.5 shrink-0 bg-gray-400" />
        <ToolStrip />
      </div>
    </div>
  )
}
